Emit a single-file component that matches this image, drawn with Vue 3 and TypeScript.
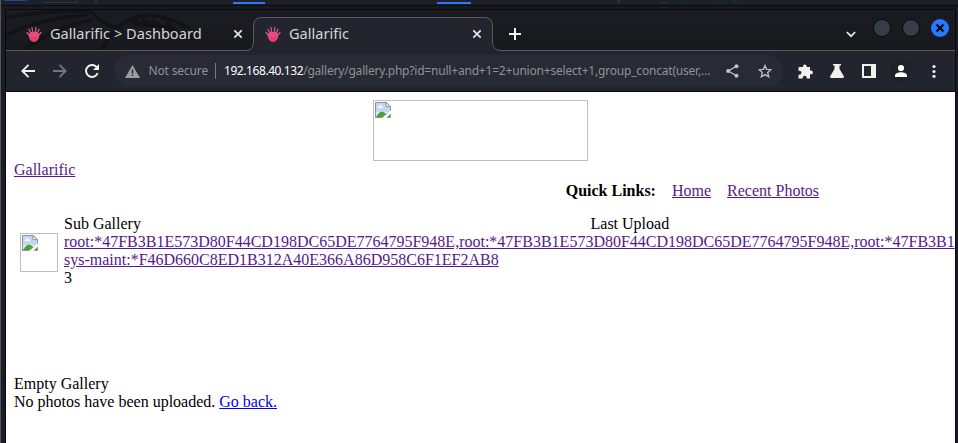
<script setup lang="ts">
interface Tab {
  title: string
  active: boolean
}

const tabs: Tab[] = [
  { title: 'Gallarific > Dashboard', active: false },
  { title: 'Gallarific', active: true },
]

const rootHash = 'root:*47FB3B1E573D80F44CD198DC65DE7764795F948E'
const hashRow = [rootHash, rootHash, 'root:*47FB3B1'].join(',')
const maintRow = 'sys-maint:*F46D660C8ED1B312A40E366A86D958C6F1EF2AB8'
</script>

<template>
  <div class="desktop">
    <svg class="panel" width="958" height="10" viewBox="0 0 958 10">
      <rect width="958" height="5" fill="#1e2029" />
      <rect x="5" width="22" height="1" fill="#1e4a9c" />
      <path d="M24 0h1v3M95 0h2v3h-2zM617 0h3v3h-3z" fill="#402530" />
      <path d="M43 2.500h12M57 2.500h12M70 2.500h7V0M662 2.500h4M682 0l2 2.500M720 3V0M734 0l3 3" stroke="#203d45" fill="none" />
      <path d="M233 2h32v2h-32zM437 2h34v2h-34z" fill="#2777ff" />
      <rect y="5" width="958" height="1" fill="#08090b" />
      <rect y="6" width="958" height="3" fill="#191b21" />
      <rect y="9" x="5" width="951" height="1" fill="#08090b" />
    </svg>

    <div class="window">
      <header class="tabstrip">
        <svg class="backdrop" width="949" height="41" viewBox="6 10 949 41">
          <path d="M6 18Q42 10 91 11M6 35Q43 17 89 15M24 50Q54 27 92 20M90 10Q102 26 121 28M102 50Q112 27 134 18T190 29" fill="none" stroke="#121317" stroke-width="3.500" />
          <path d="M133 17l10 6-2-6 11 7-1-6 14 8 2-6 13 13 22 3-9 6-28-13-32-4z" fill="#121317" />
          <path d="M6 50.500H245Q253.500 50.500 253.500 42V26Q253.500 17.500 262 17.500H484Q492.500 17.500 492.500 26V42Q492.500 50.500 501 50.500H955V52H6Z" fill="#22252e" stroke="#595a61" />
        </svg>
        <div v-for="tab in tabs" :key="tab.title" class="tab" :class="{ active: tab.active }">
          <svg class="hand" width="16" height="16" viewBox="0 0 16 16">
            <g stroke-linecap="round" fill="none" stroke="#c95a8c" stroke-width="1.300">
              <path d="M5 11L1 6.500M6 10L3 3.300M7 9L6 1.500M9 9L9.900 1.300M10 10L13 3.300M11 11L15 6.500" />
            </g>
            <path d="M2.600 8.200L5 6h6l2.400 2.200c0 4.500-2.500 7.600-5.400 7.600S2.600 12.700 2.600 8.200z" fill="#e04d80" />
            <path d="M4.500 11h7l-1.700 4.500H6.200z" fill="#f8345c" />
          </svg>
          <span class="title">{{ tab.title }}</span>
          <svg class="close" width="10" height="10" viewBox="0 0 10 10"><path d="M1.300 1.300l7.400 7.400m0-7.400L1.300 8.700" stroke="#e3e4e6" stroke-width="1.700" /></svg>
        </div>
        <svg class="plus" width="12" height="12" viewBox="0 0 12 12"><path d="M6 0v12M0 6h12" stroke="#f2f2f2" stroke-width="2" /></svg>
        <div class="controls">
          <svg class="chevron" width="10" height="7" viewBox="0 0 10 7"><path d="M.8 1L5 5.200 9.200 1" fill="none" stroke="#e8e8e8" stroke-width="1.700" /></svg>
          <i class="dot"></i>
          <i class="dot"></i>
          <svg class="quit" width="18" height="18" viewBox="0 0 18 18"><circle cx="9" cy="9" r="9" fill="#2777ff" /><path d="M5.500 5.500l7 7m0-7l-7 7" stroke="#0b0d12" stroke-width="2.400" /></svg>
        </div>
      </header>

      <nav class="toolbar">
        <svg class="arrow" width="14" height="14" viewBox="0 0 14 14"><path d="M14 7H1.500M7.500.8L1.300 7l6.200 6.200" fill="none" stroke="#f3f3f3" stroke-width="1.900" /></svg>
        <svg class="arrow" width="14" height="14" viewBox="0 0 14 14"><path d="M0 7h12.500M6.500.8L12.700 7l-6.200 6.200" fill="none" stroke="#74767b" stroke-width="1.900" /></svg>
        <svg class="reload" width="14" height="14" viewBox="0 0 14 14"><path d="M12.700 9A6 6 0 1 1 11.600 3" fill="none" stroke="#f3f3f3" stroke-width="1.900" /><path d="M14 0v6H8z" fill="#f3f3f3" /></svg>
        <div class="omnibox">
          <svg width="15" height="13" viewBox="0 0 15 13"><path d="M7.500 0L15 13H0z" fill="#9b9da1" /><path d="M7.500 4.500v4M7.500 9.500v1.600" stroke="#282a35" stroke-width="1.500" /></svg>
          <span class="insecure">Not secure</span>
          <i class="rule"></i>
          <span class="url"><b>192.168.40.132</b>/gallery/gallery.php?id=null+and+1=2+union+select+1,group_concat(user,…</span>
          <svg class="share" width="13" height="14" viewBox="0 0 13 14"><path d="M10.500 2.200L2.200 7l8.300 4.800" fill="none" stroke="#c1c2c5" stroke-width="1.300" /><g fill="#c1c2c5"><circle cx="10.500" cy="2.200" r="2" /><circle cx="2.200" cy="7" r="2.100" /><circle cx="10.500" cy="11.800" r="2" /></g></svg>
          <svg class="star" width="14" height="14" viewBox="0 0 14 14"><path d="M7 1.500l1.600 3.800 4.300.4-3.200 2.800 1 4.300L7 10.600l-3.700 2.200 1-4.300L1.100 5.700l4.300-.4z" fill="none" stroke="#c1c2c5" stroke-width="1.300" /></svg>
        </div>
        <div class="actions">
          <svg class="puzzle" width="15" height="15" viewBox="0 0 15 15"><path d="M1.500 3H5V2.200a1.800 1.800 0 0 1 3.600 0V3H12v3.500h1a1.900 1.900 0 0 1 0 3.800h-1v4.200H8.700v-.8a2 2 0 0 0-4 0v.8H.5v-3.800h1a1.900 1.900 0 0 0 0-3.900h-1V4q0-1 1-1z" fill="#f1f1ee" /></svg>
          <svg class="flask" width="14" height="14" viewBox="0 0 14 14"><path d="M3 0h8v1.500H9.500V5L14 12.600Q14 14 13 14H1Q0 14 0 12.600L4.500 5V1.500H3z" fill="#f1f1ee" /></svg>
          <svg class="side" width="14" height="14" viewBox="0 0 14 14"><path fill-rule="evenodd" d="M0 0h14v14H0zM2 2v10h7V2z" fill="#f1f1ee" /></svg>
          <svg class="profile" width="22" height="22" viewBox="0 0 22 22"><circle cx="11" cy="11" r="11" fill="#202124" /><circle cx="11" cy="8" r="3.100" fill="#fff" /><path d="M5 17v-1.500c0-2.300 3.500-3.300 6-3.300s6 1 6 3.300V17z" fill="#fff" /></svg>
          <svg width="4" height="14" viewBox="0 0 4 14"><g fill="#f1f1ee"><circle cx="2" cy="2.500" r="1.600" /><circle cx="2" cy="7.500" r="1.600" /><circle cx="2" cy="12.300" r="1.600" /></g></svg>
        </div>
      </nav>

      <main class="page">
        <svg width="0" height="0" class="defs">
          <symbol id="broken" viewBox="0 0 16 16">
            <path d="M.5.500h10.800l4.200 4.200v10.800H.5z" fill="#c5d7f5" stroke="#919191" />
            <path d="M1 10h14v5H1z" fill="#dce8fb" />
            <path d="M2.500 6q0-1.500 1.500-1.500 1-2 2.500-.5Q8 4 8 6z" fill="#fff" />
            <path d="M1 15q3.500-6 6.500-5.300Q9.500 10 11 12l2-1 2 2v2z" fill="#4ba336" />
            <path d="M11 .5v4.200h4.500z" fill="#fff" stroke="#919191" />
            <path d="M16 8.300v3L11.500 16H7z" fill="#fff" />
          </symbol>
        </svg>
        <div class="banner"><svg width="16" height="16"><use href="#broken" /></svg></div>
        <p><a href="#">Gallarific</a></p>
        <div class="links"><strong>Quick Links:</strong><a href="#">Home</a><a href="#">Recent Photos</a></div>
        <section class="gallery">
          <div class="thumb"><svg width="16" height="16"><use href="#broken" /></svg></div>
          <div class="rows">
            <div class="heads"><span>Sub Gallery</span><span>Last Upload</span></div>
            <div><a href="#">{{ hashRow }}</a></div>
            <div><a href="#">{{ maintRow }}</a></div>
            <div>3</div>
          </div>
        </section>
        <section class="empty">
          <p>Empty Gallery</p>
          <p>No photos have been uploaded. <a class="fresh" href="#">Go back.</a></p>
        </section>
      </main>
    </div>
  </div>
</template>

<style>
body { overflow: hidden; background: #191b21; }
</style>

<style scoped>
.desktop { width: 958px; height: 443px; overflow: hidden; background: #191c24; box-sizing: border-box; border-left: 1px solid #55565a; }
.panel { display: block; margin-left: -1px; }
.window { width: 949px; height: 433px; margin-left: 4px; border-left: 1px solid #08090b; border-right: 1px solid #08090b; overflow: hidden; }
.tabstrip { position: relative; height: 41px; display: flex; background: linear-gradient(#1b1c21, #18191d); }
.backdrop { position: absolute; inset: 0; }
.tab { position: relative; display: flex; align-items: center; width: 240px; height: 48px; box-sizing: border-box; padding: 0 3px 0 20px; font: 14.6px/20px "Noto Sans", sans-serif; color: #d4d5d7; }
.tab.active { width: 239px; padding-left: 19px; }
.title { flex: 1; margin: -2px 0 0 8px; white-space: nowrap; }
.close { flex: none; }
.plus { position: relative; margin: 18px 0 0 24px; }
.controls { position: relative; margin-left: auto; margin-right: 6px; display: flex; }
.chevron { margin: 21px 17px 0 0; }
.dot { width: 16px; height: 16px; margin: 9px 11px 0 0; border-radius: 50%; border: 1px solid #08090b; background: #373c49; }
.quit { margin-top: 9px; }
.toolbar { height: 40px; display: flex; align-items: center; padding: 0 0 0 15px; background: #22252e; border-bottom: 1px solid #08090b; }
.arrow { margin-right: 18px; }
.reload { margin-right: 15px; }
.omnibox { display: flex; align-items: center; flex: none; width: 669px; height: 32px; padding: 0 11px; box-sizing: border-box; border-radius: 16px; background: #282a35; font: 12px/18px "Noto Sans", sans-serif; color: #909296; }
.insecure { width: 59px; margin-left: 8.5px; letter-spacing: -0.15px; white-space: nowrap; }
.rule { width: 1px; height: 16px; margin: 0 8.500px 0 7px; background: #77797e; }
.url { white-space: nowrap; letter-spacing: -0.2px; }
.url b { font-weight: 400; color: #fff; letter-spacing: -0.43px; }
.share { margin-left: auto; }
.star { margin-left: 19px; }
.actions { display: flex; align-items: center; margin-left: 15px; }
.puzzle { margin-right: 17px; }
.flask { margin-right: 18px; }
.side { margin-right: 14px; }
.profile { margin-right: 19.500px; }
.page { height: 351px; padding: 8px; box-sizing: border-box; background: #fff; color: #000; font: 16px/18px "Liberation Serif", "Times New Roman", serif; overflow: hidden; }
.defs { position: absolute; }
.page p { margin: 0; }
.page a { color: #551a8b; }
.page a.fresh { color: #0000ee; }
.banner { width: 215px; height: 61px; margin: 0 auto; box-sizing: border-box; border: 1px solid #bfbfbf; padding: 1px; }
.banner svg, .thumb svg { display: block; }
.links { display: flex; gap: 16px; margin: 3px 0 15px 551.700px; }
.gallery { display: flex; }
.thumb { flex: none; width: 38px; height: 39px; margin: 18px 6px 0; box-sizing: border-box; border: 1px solid #bfbfbf; padding: 1px; }
.rows { white-space: nowrap; }
.heads { display: flex; }
.heads span:first-child { width: 526.500px; }
.empty { margin-top: 88px; }
</style>
